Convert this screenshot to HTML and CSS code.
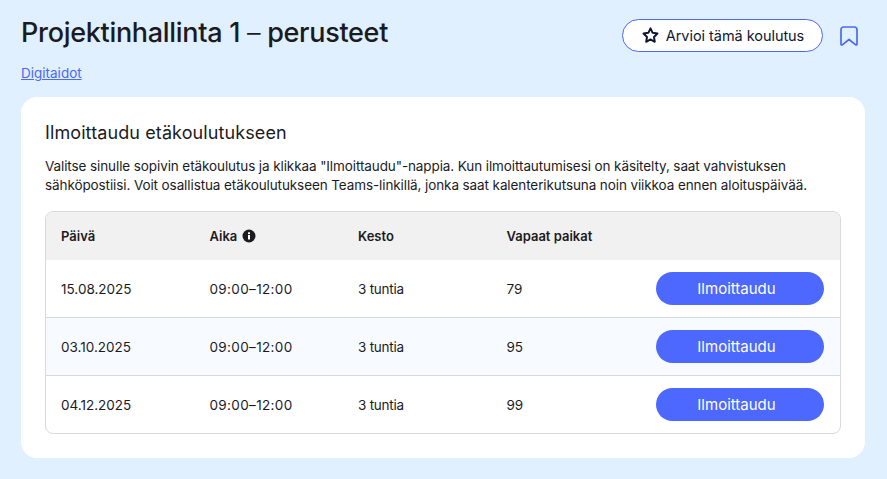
FILE: index.html
```html
<!DOCTYPE html>
<html lang="fi">
<head>
    <meta charset="UTF-8">
    <title>Projektinhallinta 1 – perusteet</title>
    <link rel="stylesheet" href="styles.css">
</head>
<body>
    <header class="top-row">
        <div class="title-block">
            <h1>Projektinhallinta 1 <span class="dash">–</span> perusteet</h1>
            <a href="#" class="category-link">Digitaidot</a>
        </div>
        <div class="top-actions">
            <button class="rate-btn">
                <svg class="star-icon" viewBox="0 0 24 24" width="19" height="19"><path d="M12 3l2.700 5.600 6.100.9-4.400 4.300 1 6.100-5.400-2.900-5.400 2.900 1-6.100-4.400-4.300 6.100-.9z" fill="none" stroke="#10162f" stroke-width="2.500" stroke-linejoin="round"/></svg>
                Arvioi tämä koulutus
            </button>
            <a href="#" class="bookmark">
                <svg viewBox="0 0 18 20" width="18" height="20"><path d="M1 3.500A2.500 2.500 0 0 1 3.500 1h11A2.500 2.500 0 0 1 17 3.500v14.700c0 .7-.8 1-1.300.6L9 13.500l-6.700 5.300c-.5.4-1.300.1-1.300-.6z" fill="none" stroke="#4c68f5" stroke-width="1.700" stroke-linejoin="round"/></svg>
            </a>
        </div>
    </header>

    <main class="card">
        <h2>Ilmoittaudu etäkoulutukseen</h2>
        <p class="intro">Valitse sinulle sopivin etäkoulutus ja klikkaa "Ilmoittaudu"-nappia. Kun ilmoittautumisesi on käsitelty, saat vahvistuksen sähköpostiisi. Voit osallistua etäkoulutukseen Teams-linkillä, jonka saat kalenterikutsuna noin viikkoa ennen aloituspäivää.</p>

        <div class="table-container">
            <div class="row head-row">
                <div>Päivä</div>
                <div class="with-icon">Aika
                    <svg viewBox="0 0 14 14" width="14" height="14"><circle cx="7" cy="7" r="6.500" fill="#1b1b1f"/><rect x="6" y="6" width="2" height="4.500" fill="#fff"/><rect x="6" y="3.300" width="2" height="1.800" fill="#fff"/></svg>
                </div>
                <div>Kesto</div>
                <div>Vapaat paikat</div>
                <div></div>
            </div>
            <div class="row">
                <div>15.08.2025</div>
                <div class="time">09:00–12:00</div>
                <div class="duration">3 tuntia</div>
                <div>79</div>
                <div class="btn-cell"><button class="signup-btn">Ilmoittaudu</button></div>
            </div>
            <div class="row alt">
                <div>03.10.2025</div>
                <div class="time">09:00–12:00</div>
                <div class="duration">3 tuntia</div>
                <div>95</div>
                <div class="btn-cell"><button class="signup-btn">Ilmoittaudu</button></div>
            </div>
            <div class="row last-row">
                <div>04.12.2025</div>
                <div class="time">09:00–12:00</div>
                <div class="duration">3 tuntia</div>
                <div>99</div>
                <div class="btn-cell"><button class="signup-btn">Ilmoittaudu</button></div>
            </div>
        </div>
    </main>
</body>
</html>
```

FILE: styles.css
```css
* {
    box-sizing: border-box;
}

body {
    margin: 0;
    padding: 16px 22px 21px 21px;
    background-color: #e0f0ff;
    color: #1b1b1f;
    font-family: 'Inter', 'Liberation Sans', sans-serif;
}

.top-row {
    display: flex;
    justify-content: space-between;
    align-items: flex-start;
    height: 81px;
    padding-right: 7px;
}

h1 {
    margin: 0;
    font-size: 27px;
    line-height: 34px;
    font-weight: 500;
    letter-spacing: -0.3px;
}

.dash {
    font-weight: 300;
}

.category-link {
    display: block;
    margin-top: 15px;
    font-size: 13.500px;
    line-height: 17px;
    color: #4c68f5;
}

.top-actions {
    display: flex;
    align-items: center;
    gap: 17px;
    margin-top: 3px;
}

.rate-btn {
    display: flex;
    align-items: center;
    justify-content: center;
    gap: 6px;
    width: 201px;
    height: 33px;
    background-color: #fff;
    border: 1px solid #4c68f5;
    border-radius: 17px;
    color: #10162f;
    font-family: inherit;
    font-size: 14.500px;
    letter-spacing: -0.05px;
}

.bookmark {
    display: flex;
}

.card {
    height: 361px;
    padding: 24px;
    background-color: #fff;
    border-radius: 16px;
}

h2 {
    margin: 0;
    font-size: 18px;
    line-height: 24px;
    font-weight: 400;
    letter-spacing: 0.1px;
}

.intro {
    margin: 12px 0 16px;
    font-size: 13.500px;
    line-height: 19px;
    letter-spacing: -0.1px;
}

.table-container {
    border: 1px solid #d9d9d9;
    border-radius: 8px;
    overflow: hidden;
}

.row {
    display: grid;
    grid-template-columns: 148.500px 148.500px 148.500px 148.500px 1fr;
    align-items: center;
    height: 58px;
    padding: 0 16px 0 15px;
    border-bottom: 1px solid #d9d9d9;
    font-size: 13.500px;
}

.head-row {
    height: 48px;
    border-bottom: none;
    background-color: #f1f1f1;
    font-size: 13px;
    font-weight: 600;
}

.last-row {
    height: 57px;
    border-bottom: none;
}

.alt {
    background-color: #f7fbff;
}

.time {
    letter-spacing: 0.35px;
}

.duration {
    letter-spacing: -0.25px;
}

.with-icon {
    display: flex;
    align-items: center;
    gap: 5px;
}

.btn-cell {
    display: flex;
    justify-content: flex-end;
}

.signup-btn {
    width: 168px;
    height: 33px;
    padding: 0 7px 0 0;
    border: none;
    border-radius: 17px;
    background-color: #4c68ff;
    color: #fff;
    font-family: inherit;
    font-size: 15px;
}
```
